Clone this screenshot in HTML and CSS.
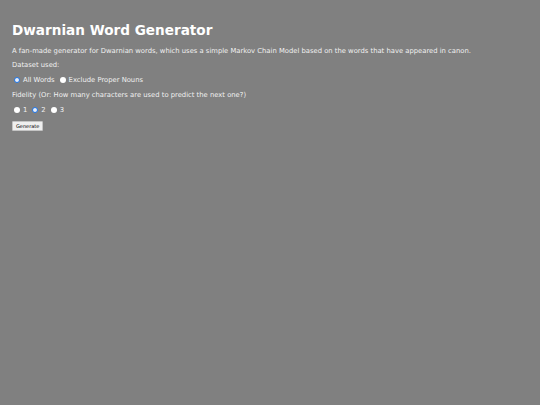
FILE: index.html
```html
<!DOCTYPE html>
<html>
<head>
<meta charset="utf-8">
<link rel="stylesheet" href="styles.css">
</head>
<body>
<main class="page">
  <h1 class="title">Dwarnian Word Generator</h1>
  <p class="line intro">A fan-made generator for Dwarnian words, which uses a simple Markov Chain Model based on the words that have appeared in canon.</p>
  <p class="line">Dataset used:</p>
  <div class="line options">
    <label class="opt"><span class="radio checked"></span>All Words</label>
    <label class="opt"><span class="radio"></span>Exclude Proper Nouns</label>
  </div>
  <p class="line">Fidelity (Or: How many characters are used to predict the next one?)</p>
  <div class="line options">
    <label class="opt"><span class="radio"></span>1</label>
    <label class="opt"><span class="radio checked"></span>2</label>
    <label class="opt"><span class="radio"></span>3</label>
  </div>
  <div class="line btn-row">
    <button class="btn">Generate</button>
  </div>
</main>
</body>
</html>
```
FILE: styles.css
```css
html, body {
  margin: 0;
  padding: 0;
  background: #808080;
}
body {
  font-family: "DejaVu Sans", Verdana, sans-serif;
  color: #f0f0f0;
}
.page {
  padding: 20px 12px;
  display: flex;
  flex-direction: column;
}
.title {
  margin: 0;
  font-size: 13.6px;
  line-height: 20px;
  font-weight: bold;
  color: #ffffff;
}
.line {
  margin: 0;
  font-size: 6.8px;
  line-height: 15px;
  height: 15px;
  display: flex;
  align-items: center;
}
.intro {
  margin-top: 4px;
  height: 14px;
}
.options {
  gap: 3px;
}
.opt {
  display: flex;
  align-items: center;
  gap: 3px;
}
.radio {
  width: 6px;
  height: 6px;
  margin-left: 2px;
  margin-bottom: 1px;
  border-radius: 50%;
  background: #ffffff;
  box-sizing: border-box;
}
.radio.checked {
  border: 1.5px solid #1a73e8;
  background: #e8eef8;
}
.btn-row { height: 15px; }
.btn {
  font-family: "DejaVu Sans", Verdana, sans-serif;
  font-size: 5px;
  padding: 1px 3px;
  margin-top: 1px;
  background: #efefef;
  border: 1px solid #c4c4c4;
  border-radius: 1px;
  color: #000;
  line-height: 6px;
}
```
